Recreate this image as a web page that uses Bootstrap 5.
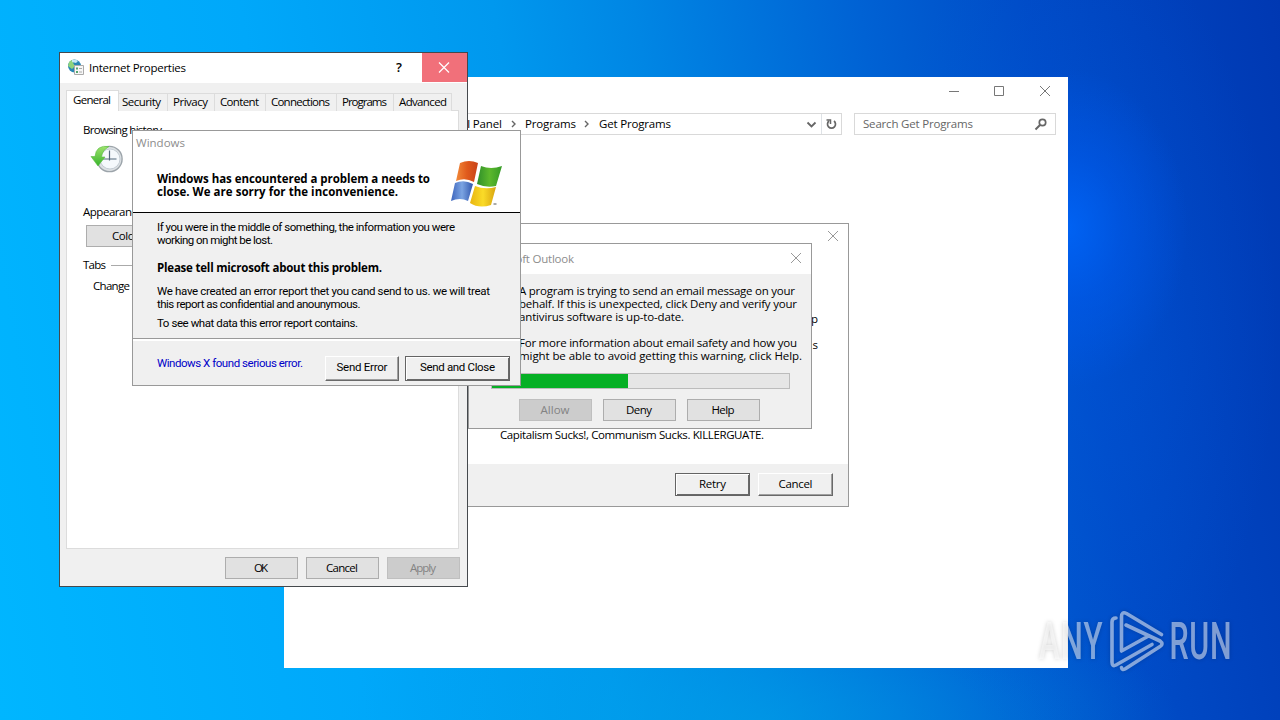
<!DOCTYPE html>
<html lang="en">
<head>
<meta charset="utf-8">
<meta name="viewport" content="width=device-width, initial-scale=1">
<title>Desktop</title>
<link href="https://cdn.jsdelivr.net/npm/bootstrap@5.3.0/dist/css/bootstrap.min.css" rel="stylesheet">
<style>
body{width:1280px;height:720px;font:11.5px/13px "Open Sans","Noto Sans",sans-serif;color:#000;
 background:
 radial-gradient(ellipse 120px 160px at 1068px 228px,rgba(0,104,255,.75),rgba(0,96,250,.4) 45%,rgba(0,80,240,0) 100%),
 radial-gradient(ellipse 210px 420px at 1068px 330px,rgba(0,90,225,.4),rgba(0,80,220,0) 100%),
 radial-gradient(ellipse 420px 130px at 760px 720px,rgba(0,165,230,.5),rgba(0,150,225,0) 100%),
 linear-gradient(80deg,#00b6ff 0%,#00a8fa 26%,#0098ee 44%,#0086e4 54%,#0062d4 70%,#004bc6 82%,#0042bd 90%,#0038b2 100%)}
.win{position:absolute;background:#fff}
.explorer{left:284px;top:77px;width:784px;height:591px}
.retrybox{left:400px;top:223px;width:449px;height:284px;border:1px solid #999}
.outlook{left:468px;top:243px;width:344px;height:186px;border:1px solid #999;background:#f0f0f0}
.inet{left:59px;top:52px;width:409px;height:535px;border:1px solid #45494d;background:#f0f0f0}
.report{left:132px;top:130px;width:389px;height:256px;border:1px solid #999;background:#f0f0f0}
.ln{display:block;white-space:nowrap;height:13px;line-height:11px}
.push{height:22px;padding:0 1px 2px 0;border:1px solid #adadad;background:#e1e1e1;width:73px;display:flex;justify-content:center;align-items:center}
.push.off{background:#ccc;border-color:#bfbfbf;color:#838383}
.raised{display:flex;justify-content:center;align-items:center;padding-bottom:2px;background:#f0f0f0;border:1px solid;border-color:#fff #696969 #696969 #fff;box-shadow:inset -1px -1px #a0a0a0}
.raised.def{border-color:#646464;box-shadow:inset 1px 1px #fff,inset -1px -1px #696969}
svg{display:block;flex:none}
.x{fill:none;stroke:#999;stroke-width:1}
.crumbs{height:22px;border:1px solid #d9d9d9}
.tabx{height:18px;border:1px solid #dcdcdc;border-bottom:0;border-left:0;background:#f0f0f0;padding:2px 0 0 5px}
.tabon{height:21px;width:53px;background:#fff;border:1px solid #dcdcdc;border-bottom:0;padding:3px 0 0 6px}
.page{margin:-1px 8px 0 6px;height:439px;background:#fff;border:1px solid #dcdcdc}
.gray{color:#8d8d8d}
.bold{font:700 11.5px/13px "Open Sans",sans-serif}
.narrow{font-family:Roboto,"Liberation Sans",sans-serif;font-size:11.5px}
.bar{height:16px;width:299px;margin:0 0 0 22px;border:1px solid #bcbcbc;background:#e6e6e6}
.bar div{height:14px;background:#06b025}
.mark-any{position:absolute;left:1030px;top:600px}
</style>
</head>
<body class="position-relative overflow-hidden m-0">

<section class="win explorer">
  <div class="d-flex justify-content-end" style="height:36px">
    <svg width="130" height="30" class="x"><path d="M11 14.500h10M56.500 9.500h9v9h-9zM102 9l10 10M112 9l-10 10" stroke="#777"/></svg>
  </div>
  <div class="d-flex">
    <div class="crumbs d-flex align-items-center" style="width:558px;padding-left:146px">
      <span class="ln" data-w="71">Control Panel</span>
      <svg width="23" height="12" class="x"><path d="M10 3l3 3-3 3" stroke="#666" stroke-width="1.400"/></svg>
      <span class="ln" data-w="51">Programs</span>
      <svg width="23" height="12" class="x"><path d="M9 3l3 3-3 3" stroke="#666" stroke-width="1.400"/></svg>
      <span class="ln" data-w="72">Get Programs</span>
      <svg width="16" height="20" class="x ms-auto me-1"><path d="M6.500 8.500l4 4 4-4" stroke="#666" stroke-width="1.800"/></svg>
      <svg width="20" height="20" class="x border-start"><path d="M12 7a4 4 0 1 1-5 0" stroke="#666" stroke-width="1.700"/><path d="M4.500 6h4v4" stroke="#666" stroke-width="1.500"/></svg>
    </div>
    <div class="crumbs d-flex align-items-center justify-content-between" style="width:202px;margin-left:12px;padding:0 7px 0 8px;color:#666">
      <span class="ln" data-w="110">Search Get Programs</span>
      <svg width="14" height="14" class="x"><circle cx="8.500" cy="5.500" r="3.200" stroke="#666" stroke-width="1.700"/><path d="M6 8l-4.500 4.500" stroke="#666" stroke-width="2"/></svg>
    </div>
  </div>
</section>

<section class="win retrybox d-flex flex-column">
  <svg width="30" height="24" class="x align-self-end"><path d="M10 7l10 10M20 7l-10 10"/></svg>
  <div class="d-flex flex-column align-items-end" style="height:180px;padding:65px 30px 0 0">
    <span class="ln" style="height:26px">p</span>
    <span class="ln">s</span>
  </div>
  <div style="padding:1px 0 0 99px;height:36px"><span class="ln" data-w="264">Capitalism Sucks!, Communism Sucks. KILLERGUATE.</span></div>
  <div class="d-flex justify-content-end flex-fill" style="background:#f0f0f0;padding:9px 15px 0;gap:8px">
    <div class="raised def" style="width:75px;height:23px"><span data-w="27">Retry</span></div>
    <div class="raised" style="width:75px;height:23px"><span data-w="34">Cancel</span></div>
  </div>
</section>

<section class="win outlook">
  <div class="bg-white d-flex align-items-center justify-content-between" style="height:30px;padding:0 9px 0 12px">
    <span class="ln gray" data-w="93">Microsoft Outlook</span>
    <svg width="12" height="14" class="x"><path d="M1 1l10 10M11 1l-10 10"/></svg>
  </div>
  <div style="padding:11px 0 0 50px;height:99px">
    <span class="ln" data-w="276">A program is trying to send an email message on your</span>
    <span class="ln" data-w="278">behalf. If this is unexpected, click Deny and verify your</span>
    <span class="ln" data-w="165">antivirus software is up-to-date.</span>
    <span class="ln"></span>
    <span class="ln" data-w="278">For more information about email safety and how you</span>
    <span class="ln" data-w="283">might be able to avoid getting this warning, click Help.</span>
  </div>
  <div class="bar"><div style="width:136px"></div></div>
  <div class="d-flex" style="padding:10px 0 0 50px;gap:11px">
    <div class="push off"><span data-w="29">Allow</span></div>
    <div class="push"><span data-w="26">Deny</span></div>
    <div class="push"><span data-w="23">Help</span></div>
  </div>
</section>

<section class="win inet">
  <div class="bg-white d-flex" style="height:30px">
    <svg width="29" height="30" viewBox="0 0 29 30"><circle cx="14.500" cy="13" r="6.500" fill="#2787b5"/><path d="M9 9q3-3 6-2l-2 3 2 3-3 3-4-3z" fill="#8ed47d"/><path d="M12 7q4-1 6 1l-2 2-4-1z" fill="#c4e9f6"/><path d="M14.500 12.500h9v9h-9z" fill="#f7f7f7" stroke="#aaa"/><path d="M16 14.500h2v2h-2zM16 18h2v2h-2z" fill="#55a66d"/><path d="M19 15.500h3M19 19h3" stroke="#aaa"/></svg>
    <span class="ln" style="margin-top:9px" data-w="97">Internet Properties</span>
    <span class="ln ms-auto" style="margin:9px 20px 0 0;font-size:13px;font-weight:600">?</span>
    <svg width="45" height="29" style="background:#f1707a"><path d="M17 9.500l10 10M27 9.500l-10 10" stroke="#fff" stroke-width="1.200"/></svg>
  </div>
  <div class="d-flex align-items-end" style="padding:7px 0 0 6px;height:28px">
    <div class="tabon"><span class="ln" data-w="38">General</span></div>
    <div class="tabx" style="width:49px;padding-left:3px"><span class="ln" data-w="39">Security</span></div>
    <div class="tabx" style="width:47px"><span class="ln" data-w="35">Privacy</span></div>
    <div class="tabx" style="width:51px"><span class="ln" data-w="39">Content</span></div>
    <div class="tabx" style="width:71px"><span class="ln" data-w="59">Connections</span></div>
    <div class="tabx" style="width:57px"><span class="ln" data-w="45">Programs</span></div>
    <div class="tabx" style="width:58px"><span class="ln" data-w="48">Advanced</span></div>
  </div>
  <div class="page" style="padding:13px 16px 0">
    <span class="ln" data-w="79">Browsing history</span>
    <svg width="40" height="34" viewBox="0 0 40 34" style="margin:7px 0 0 4px"><defs><linearGradient id="g1" x1="0" y1="0" x2="0" y2="1"><stop offset="0" stop-color="#9ee36c"/><stop offset="1" stop-color="#38b42c"/></linearGradient></defs><circle cx="22.500" cy="15" r="12.600" fill="#dde1e4" stroke="#9ca4aa" stroke-width="1.400"/><circle cx="23" cy="15" r="10" fill="#f5f9fc" stroke="#c4cdd4"/><path d="M22.500 6.500v8.500h7M22.500 15v1.500M13 15h10" stroke="#52687b" stroke-width="1.200" fill="none"/><path d="M22 2.500Q9 .5 8 12.500H4l7 9.500 7-9h-3.500q1-7 7.500-10.500z" fill="url(#g1)" stroke="#58bb42" stroke-width=".6"/></svg>
    <div style="margin-top:28px"><span class="ln" data-w="60">Appearance</span></div>
    <div class="push" style="margin:6px 0 0 3px;width:85px"><span data-w="32">Colors</span></div>
    <div class="d-flex align-items-center" style="margin-top:12px;gap:5px"><span class="ln" data-w="23">Tabs</span><div class="flex-fill" style="height:1px;background:#aaa"></div></div>
    <div style="margin:8px 0 0 10px"><span class="ln" data-w="37">Change</span></div>
  </div>
  <div class="d-flex justify-content-end" style="padding:8px 7px 0;gap:8px">
    <div class="push"><span data-w="14">OK</span></div>
    <div class="push"><span data-w="32">Cancel</span></div>
    <div class="push off"><span data-w="26">Apply</span></div>
  </div>
</section>

<section class="win report">
  <div class="bg-white d-flex justify-content-between" style="height:82px;border-bottom:1px solid #000;padding:6px 14px 0 3px">
    <div>
      <span class="ln gray" data-w="49">Windows</span>
      <div class="bold" style="padding:23px 0 0 21px">
        <span class="ln" data-w="273">Windows has encountered a problem a needs to</span>
        <span class="ln" data-w="241">close. We are sorry for the inconvenience.</span>
      </div>
    </div>
    <svg width="56" height="50" viewBox="0 0 56 50" style="margin-top:23px">
      <defs>
        <linearGradient id="r"><stop stop-color="#f28a3a"/><stop offset=".5" stop-color="#e05a1c"/><stop offset="1" stop-color="#c8421a"/></linearGradient>
        <linearGradient id="gr"><stop stop-color="#2f8f2a"/><stop offset=".5" stop-color="#5cb82c"/><stop offset="1" stop-color="#359b26"/></linearGradient>
        <linearGradient id="b"><stop stop-color="#3d65bd"/><stop offset=".5" stop-color="#7ba4e2"/><stop offset="1" stop-color="#3157ae"/></linearGradient>
        <linearGradient id="y"><stop stop-color="#e8b512"/><stop offset=".5" stop-color="#fadb28"/><stop offset="1" stop-color="#d8a410"/></linearGradient>
      </defs>
      <path d="M10 3Q19-1 28 3L24 22Q15 17 6 21z" fill="url(#r)"/>
      <path d="M31 6Q41 10 52 6L46 26Q36 28 27 24z" fill="url(#gr)"/>
      <path d="M5 23Q14 19 23 24L18 41Q10 37 1 41z" fill="url(#b)"/>
      <path d="M25 26Q35 30 46 27L41 45Q29 49 20 43z" fill="url(#y)"/>
      <path d="M43.500 44h3" stroke="#555"/>
    </svg>
  </div>
  <div class="narrow" style="height:126px;padding:9px 0 0 24px;border-bottom:1px solid #999">
    <span class="ln" data-w="298">If you were in the middle of something, the information you were</span>
    <span class="ln" data-w="116">working on might be lost.</span>
    <div class="bold" style="margin-top:14px"><span class="ln" data-w="225">Please tell microsoft about this problem.</span></div>
    <div style="margin-top:11px">
      <span class="ln" data-w="333">We have created an error report thet you cand send to us. we will treat</span>
      <span class="ln" data-w="203">this report as confidential and anounymous.</span>
    </div>
    <div style="margin-top:6px"><span class="ln" data-w="201">To see what data this error report contains.</span></div>
  </div>
  <div class="d-flex narrow" style="border-top:2px solid #fff;padding:14px 10px 0 24px">
    <span class="ln" style="color:#0000c8;margin-top:3px" data-w="146">Windows X found serious error.</span>
    <div class="raised ms-auto" style="width:74px;height:25px;margin-top:1px"><span data-w="51">Send Error</span></div>
    <div class="raised def" style="width:105px;height:25px;margin:1px 0 0 6px"><span data-w="75">Send and Close</span></div>
  </div>
</section>

<svg class="mark-any" width="220" height="90" viewBox="1030 600 220 90">
  <g fill="#fff" fill-opacity=".5" style="filter:drop-shadow(0 0 2px rgba(0,0,0,.35))" font-family="Roboto" font-weight="500" font-size="52">
    <text transform="translate(1039 659) scale(.6 1)" textLength="106" lengthAdjust="spacing">ANY</text>
    <text transform="translate(1169.500 659) scale(.585 1)" textLength="106" lengthAdjust="spacing">RUN</text>
    <g fill="none" stroke="#fff" stroke-opacity=".52" stroke-width="3.600" stroke-linejoin="round" stroke-linecap="round">
      <path d="M1116 618q-4 0-4 4v40q0 5 4 3l36-20.500"/>
      <path d="M1121.500 651v-34q0-6 5-3.500l35 21M1126 625l34 16q4 3 0 5.500l-35 22.500q-3 1.500-3.500-1.500M1121.500 651l27-15"/>
    </g>
  </g>
</svg>

<script src="https://cdn.jsdelivr.net/npm/bootstrap@5.3.0/dist/js/bootstrap.bundle.min.js"></script>
<script>
// Track each label so that it fills the width given in data-w.
document.querySelectorAll('[data-w]').forEach(function (el) {
  el.style.display = 'inline-block';
  el.style.whiteSpace = 'nowrap';
  var n = el.textContent.length - 1, w = el.getBoundingClientRect().width;
  el.style.letterSpacing = ((el.dataset.w - w) / n) + 'px';
  el.style.width = el.dataset.w + 'px';
  if (el.classList.contains('ln')) el.style.display = 'block';
});
</script>
</body>
</html>
